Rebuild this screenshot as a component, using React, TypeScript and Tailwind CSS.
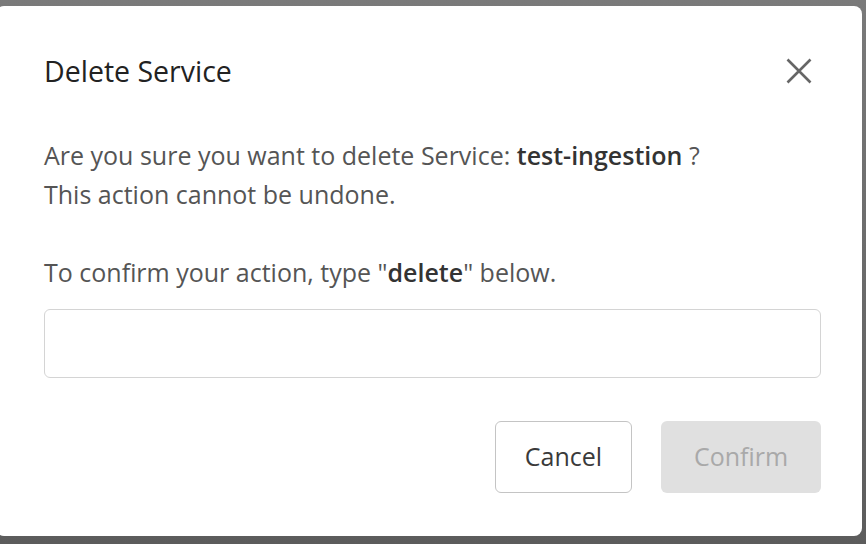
import { useState } from 'react';

export default function App() {
  const [value, setValue] = useState('');
  const canConfirm = value === 'delete';

  return (
    <div className="w-[866px] h-[544px] overflow-hidden bg-gradient-to-b from-[#7a7a7a] to-[#5c5c5c] pt-[6px] font-['Open_Sans',sans-serif]">
      <div className="ml-[-4px] w-[866px] h-[530px] bg-white rounded-[8px] pl-[48px] pr-[41px] pt-[49px] pb-[43px] flex flex-col">
        {/* Header */}
        <div className="flex items-center justify-between h-[32px]">
          <h2 className="text-[28.5px] leading-[32px] text-[#222]">Delete Service</h2>
          <button className="w-[32px] h-[32px] mr-[6px] flex items-center justify-center text-[#666]">
            <svg width="26" height="26" viewBox="0 0 26 26" fill="none" stroke="currentColor" strokeWidth="2.6">
              <path d="M1.5 1.5L24.5 24.5M24.5 1.5L1.5 24.5" />
            </svg>
          </button>
        </div>

        {/* Body */}
        <div className="mt-[49px] text-[25px] leading-[39px] text-[#555]">
          <p>
            Are you sure you want to delete Service: <span className="font-semibold text-[#333]">test-ingestion</span> ?
          </p>
          <p>This action cannot be undone.</p>
        </div>

        <p className="mt-[39px] text-[25px] leading-[38px] text-[#555]">
          To confirm your action, type "<span className="font-semibold text-[#333]">delete</span>" below.
        </p>

        <input
          type="text"
          value={value}
          onChange={(e) => setValue(e.target.value)}
          className="mt-[18px] h-[69px] w-full border border-[#d4d4d4] rounded-[6px] px-4 text-[25px] text-[#333] outline-none"
        />

        {/* Actions */}
        <div className="mt-[43px] flex justify-end gap-[29px]">
          <button className="w-[137px] h-[72px] border border-[#c4c4c4] rounded-[6px] text-[25px] text-[#3a3a3a] bg-white">
            Cancel
          </button>
          <button
            disabled={!canConfirm}
            className="w-[160px] h-[72px] rounded-[6px] text-[25px] bg-[#e0e0e0] text-[#a9a9a9]"
          >
            Confirm
          </button>
        </div>
      </div>
    </div>
  );
}
